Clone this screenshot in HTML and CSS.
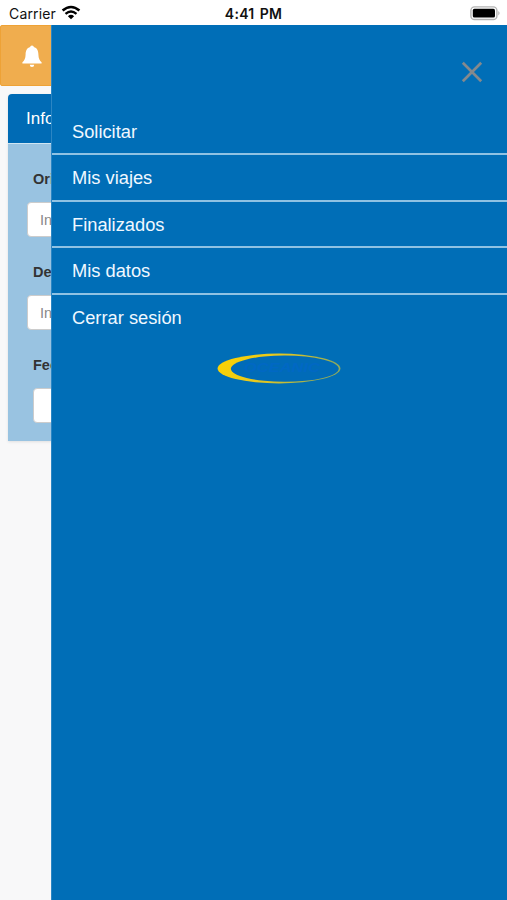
FILE: index.html
```html
<!DOCTYPE html>
<html lang="es">
<head>
    <meta charset="UTF-8">
    <meta name="viewport" content="width=device-width, initial-scale=1.0">
    <title>Solicitar</title>
    <link rel="stylesheet" href="styles.css">
</head>
<body>
    <!-- Status bar -->
    <header class="status-bar">
        <div class="carrier">
            <span>Carrier</span>
            <svg class="wifi" viewBox="0 0 20 15" width="20" height="15">
                <path d="M1.6 5.6 Q10 -1.6 18.4 5.6" fill="none" stroke="#000" stroke-width="2.6"/>
                <path d="M4.5 8.8 Q10 4.2 15.5 8.8" fill="none" stroke="#000" stroke-width="2.3"/>
                <path d="M6.9 11.2 Q10 8.5 13.1 11.2 L10 14.2 Z"/>
            </svg>
        </div>
        <div class="time">4:41 PM</div>
        <svg class="battery" viewBox="0 0 31 15" width="31" height="15">
            <rect x="0.9" y="0.9" width="26" height="12.6" rx="3.6" fill="#fff" stroke="#b4b4b4" stroke-width="1.4"/>
            <rect x="2.8" y="2.8" width="22.2" height="8.8" rx="1.6"/>
            <path d="M28.4 5 Q30.6 7.2 28.4 9.4 Z" fill="#aaa"/>
        </svg>
    </header>

    <main class="screen">
        <button class="alert-btn">
            <svg viewBox="0 0 20 24" width="20" height="24">
                <path d="M10 0.5 C11.2 0.5 11.7 1.3 11.8 2.1 C15.2 3.1 16.3 6 16.4 9.5 C16.5 13.5 17.7 15.8 19.6 17.2 V18.4 H0.4 V17.2 C2.3 15.8 3.5 13.5 3.6 9.5 C3.7 6 4.8 3.1 8.2 2.1 C8.3 1.3 8.8 0.5 10 0.5 Z M7.8 19.8 H12.2 A2.2 2.3 0 0 1 7.8 19.8 Z" fill="#fff"/>
            </svg>
        </button>

        <form class="panel">
            <div class="panel-heading">Información</div>
            <div class="panel-body">
                <label for="origen">Origen</label>
                <input type="text" id="origen" placeholder="Introduce origen">
                <label for="destino">Destino</label>
                <input type="text" id="destino" placeholder="Introduce destino">
                <label for="fecha">Fecha</label>
                <input type="text" id="fecha" class="date">
            </div>
        </form>
    </main>

    <!-- Side menu over the page -->
    <nav class="side-menu">
        <svg class="close" viewBox="0 0 22 22" width="22" height="22">
            <path d="M1.8 1.8 L20.2 20.2 M20.2 1.8 L1.8 20.2" stroke="#84898d" stroke-width="2.7"/>
        </svg>
        <ul>
            <li>Solicitar</li>
            <li>Mis viajes</li>
            <li>Finalizados</li>
            <li>Mis datos</li>
            <li>Cerrar sesión</li>
        </ul>
        <svg class="logo" viewBox="0 0 124 31" width="124" height="31">
            <defs>
                <linearGradient id="ring" x1="0" y1="0" x2="1" y2="0.2">
                    <stop offset="0" stop-color="#ffd400"/>
                    <stop offset="0.5" stop-color="#e6c81e"/>
                    <stop offset="1" stop-color="#8fab5c"/>
                </linearGradient>
            </defs>
            <ellipse cx="62" cy="15.5" rx="61.4" ry="14.9" fill="url(#ring)"/>
            <ellipse cx="67.8" cy="15.7" rx="53.9" ry="13.1" fill="#006bb8"/>
            <text class="logo-text" x="27" y="19" textLength="76" lengthAdjust="spacingAndGlyphs">OCEANIC</text>
        </svg>
    </nav>
</body>
</html>
```

FILE: styles.css
```css
* {
    box-sizing: border-box;
}

body {
    font-family: "Liberation Sans", Arial, sans-serif;
    background-color: #f8f8f9;
    color: #333;
    margin: 0;
    height: 900px;
    position: relative;
    overflow: hidden;
}

.status-bar {
    display: grid;
    grid-template-columns: 1fr auto 1fr;
    align-items: center;
    height: 25px;
    padding: 2px 6px 0 9px;
    background-color: #fff;
    color: #111;
    font-family: Inter, sans-serif;
    font-size: 14px;
}

.carrier {
    display: flex;
    align-items: center;
    gap: 5px;
    letter-spacing: 0.15px;
}

.wifi {
    margin-top: -2px;
}

.time {
    margin-right: 3px;
    font-weight: 600;
    letter-spacing: 0.25px;
    word-spacing: 1.5px;
}

.battery {
    justify-self: end;
    margin-top: -1px;
}

.alert-btn {
    display: block;
    width: 63px;
    height: 61px;
    padding: 6px 0 0;
    border: 1px solid #eea236;
    border-radius: 2px;
    background-color: #f0ad4e;
}

.panel {
    margin: 8px 8px 0;
    border-radius: 4px 4px 0 0;
    overflow: hidden;
    box-shadow: 0 1px 3px rgba(0, 0, 0, 0.1);
}

.panel-heading {
    height: 50px;
    padding-left: 18px;
    line-height: 49px;
    background-color: #006bb5;
    border-bottom: 1px solid #cfe5f2;
    color: #fff;
    font-size: 17px;
}

.panel-body {
    height: 297px;
    padding: 24px 18px 0 19px;
    background-color: #99c3e1;
}

label {
    display: block;
    height: 34px;
    padding-left: 6px;
    line-height: 23px;
    font-size: 14.5px;
    font-weight: bold;
}

input[type="text"] {
    display: block;
    width: 100%;
    height: 35px;
    margin-bottom: 24px;
    padding: 0 12px;
    border: 1px solid #ccc;
    border-radius: 4px;
    background-color: #fff;
    font-family: inherit;
    font-size: 14.5px;
}

input[type="text"].date {
    width: 200px;
    margin-left: 6px;
}

input::placeholder {
    color: #888;
}

.side-menu {
    position: absolute;
    top: 25px;
    right: 0;
    bottom: 0;
    left: 51px;
    display: flex;
    flex-direction: column;
    align-items: center;
    padding-top: 36px;
    border-left: 1px solid #2b86c4;
    background-color: #006eb7;
}

.close {
    align-self: flex-end;
    margin-right: 24px;
}

.side-menu ul {
    width: 100%;
    margin: 26px 0 0;
    padding: 0;
    list-style: none;
}

.side-menu li {
    height: 46.4px;
    padding-left: 20px;
    border-bottom: 2px solid #8fc2e3;
    color: #f0f8ff;
    font-size: 18.3px;
    line-height: 46px;
}

.side-menu li:last-child {
    border-bottom: none;
}

.logo {
    margin: 12px 1px 0 0;
}

.logo-text {
    fill: #0068c4;
    font-size: 12px;
    font-style: italic;
    font-weight: bold;
}
```
